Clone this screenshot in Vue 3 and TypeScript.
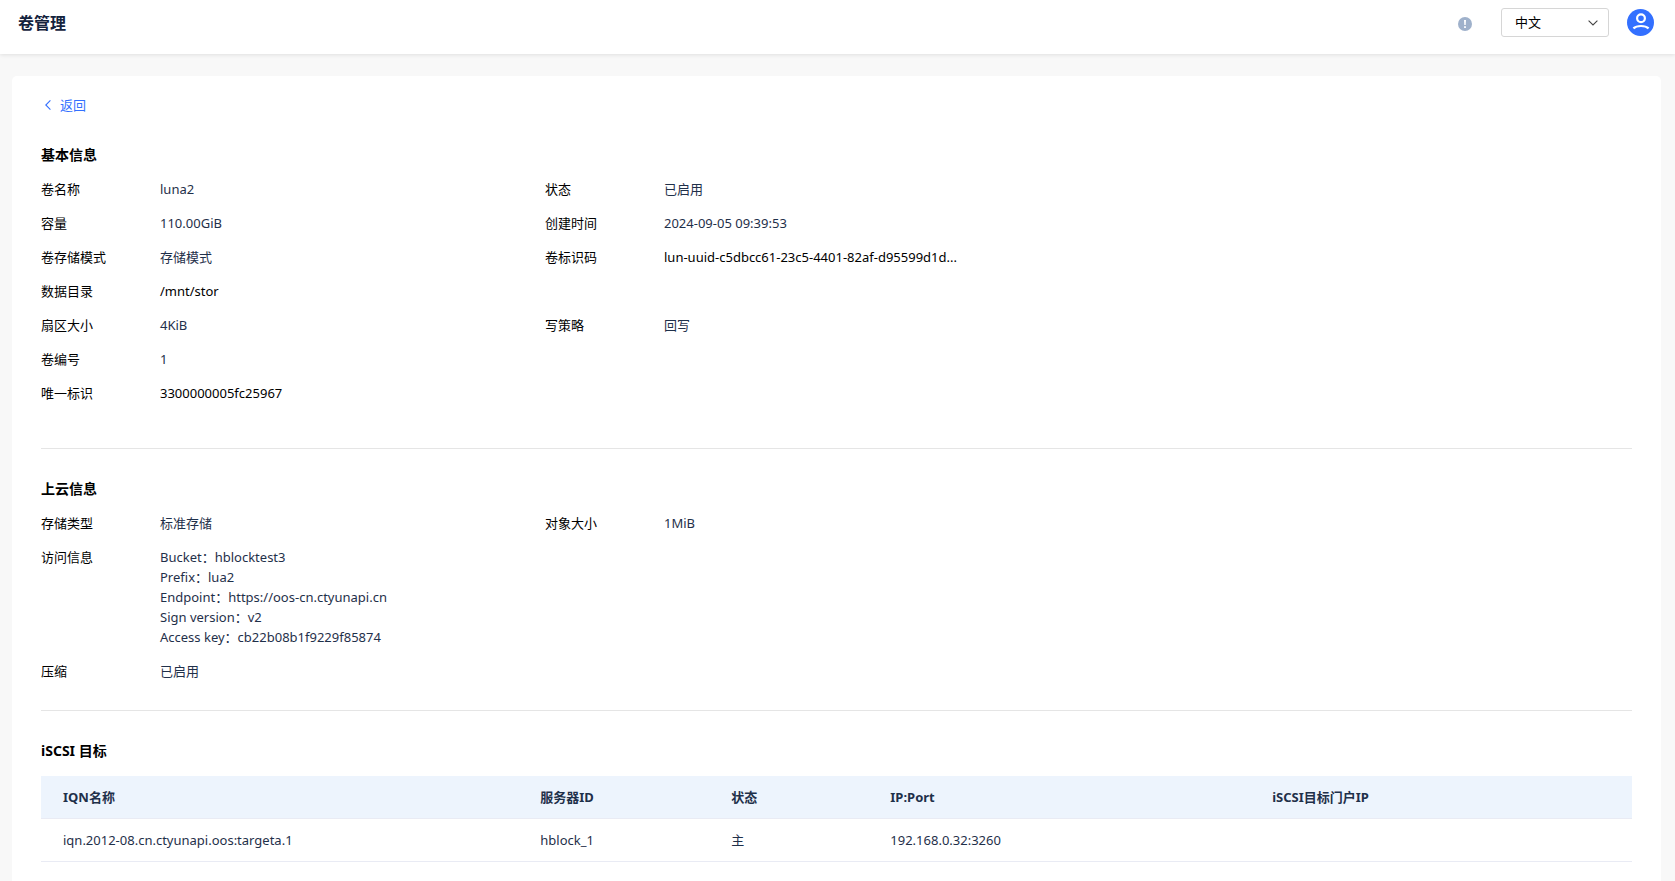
<script setup lang="ts">
import { ref } from 'vue'

interface Field {
  label: string
  lines: string[]
  column?: 1 | 2
  strong?: boolean
}

interface Target {
  iqn: string
  server: string
  status: string
  address: string
  portal: string
}

const language = ref('zh')

const basicFields: Field[] = [
  { label: '卷名称', lines: ['luna2'] },
  { label: '状态', lines: ['已启用'], column: 2 },
  { label: '容量', lines: ['110.00GiB'] },
  { label: '创建时间', lines: ['2024-09-05 09:39:53'], column: 2 },
  { label: '卷存储模式', lines: ['存储模式'] },
  { label: '卷标识码', lines: ['lun-uuid-c5dbcc61-23c5-4401-82af-d95599d1d...'], column: 2, strong: true },
  { label: '数据目录', lines: ['/mnt/stor'], strong: true },
  { label: '扇区大小', lines: ['4KiB'] },
  { label: '写策略', lines: ['回写'], column: 2 },
  { label: '卷编号', lines: ['1'] },
  { label: '唯一标识', lines: ['3300000005fc25967'], strong: true },
]

const cloudFields: Field[] = [
  { label: '存储类型', lines: ['标准存储'] },
  { label: '对象大小', lines: ['1MiB'], column: 2 },
  {
    label: '访问信息',
    lines: [
      'Bucket：hblocktest3',
      'Prefix：lua2',
      'Endpoint：https://oos-cn.ctyunapi.cn',
      'Sign version：v2',
      'Access key：cb22b08b1f9229f85874',
    ],
  },
  { label: '压缩', lines: ['已启用'] },
]

const targets: Target[] = [
  { iqn: 'iqn.2012-08.cn.ctyunapi.oos:targeta.1', server: 'hblock_1', status: '主', address: '192.168.0.32:3260', portal: '' },
]
</script>

<template>
  <div class="page">
    <header class="topbar">
      <h1 class="title">卷管理</h1>
      <div class="tools">
        <button class="icon-button notice" type="button" aria-label="提示">
          <svg width="14" height="14" viewBox="0 0 14 14">
            <circle cx="7" cy="7" r="7" fill="#9fb1cb" />
            <path d="M6 3h2l-.3 5H6.3z" fill="#fff" />
            <rect x="6.1" y="9.2" width="1.8" height="1.8" fill="#fff" />
          </svg>
        </button>
        <div class="select">
          <select v-model="language" aria-label="语言">
            <option value="zh">中文</option>
            <option value="en">English</option>
          </select>
          <svg class="chevron" width="10" height="6" viewBox="0 0 10 6" aria-hidden="true">
            <path d="M.6.6 5 5 9.4.6" fill="none" stroke="#444" stroke-width="1.1" />
          </svg>
        </div>
        <button class="icon-button" type="button" aria-label="用户">
          <svg width="27" height="27" viewBox="0 0 27 27">
            <circle cx="13.5" cy="13.5" r="13.5" fill="#3370ff" />
            <circle cx="14" cy="9.3" r="3.9" fill="none" stroke="#fff" stroke-width="2.2" />
            <path d="M6.4 19.4C9.8 16.2 18.2 16.2 21.6 19.4" fill="none" stroke="#fff" stroke-width="2.2" />
          </svg>
        </button>
      </div>
    </header>

    <main class="card">
      <a class="back" href="#">
        <svg width="6" height="10" viewBox="0 0 6 10" aria-hidden="true">
          <path d="M5.4.4.8 5l4.6 4.6" fill="none" stroke="#3370ff" stroke-width="1.1" />
        </svg>
        <span>返回</span>
      </a>

      <section class="basic">
        <h2>基本信息</h2>
        <dl class="fields">
          <div v-for="f in basicFields" :key="f.label" class="field" :class="{ second: f.column === 2, strong: f.strong }">
            <dt>{{ f.label }}</dt>
            <dd><div v-for="line in f.lines" :key="line">{{ line }}</div></dd>
          </div>
        </dl>
      </section>

      <section class="cloud">
        <h2>上云信息</h2>
        <dl class="fields">
          <div v-for="f in cloudFields" :key="f.label" class="field" :class="{ second: f.column === 2 }">
            <dt>{{ f.label }}</dt>
            <dd><div v-for="line in f.lines" :key="line">{{ line }}</div></dd>
          </div>
        </dl>
      </section>

      <section class="targets">
        <h2>iSCSI 目标</h2>
        <table>
          <colgroup>
            <col class="col-iqn" />
            <col class="col-server" />
            <col class="col-status" />
            <col />
            <col />
          </colgroup>
          <thead>
            <tr>
              <th scope="col">IQN名称</th>
              <th scope="col">服务器ID</th>
              <th scope="col">状态</th>
              <th scope="col">IP:Port</th>
              <th scope="col">iSCSI目标门户IP</th>
            </tr>
          </thead>
          <tbody>
            <tr v-for="t in targets" :key="t.iqn">
              <td>{{ t.iqn }}</td>
              <td>{{ t.server }}</td>
              <td>{{ t.status }}</td>
              <td>{{ t.address }}</td>
              <td>{{ t.portal }}</td>
            </tr>
          </tbody>
        </table>
      </section>
    </main>
  </div>
</template>

<style>
body {
  margin: 0;
  background: #f8f8f8;
}
</style>

<style scoped>
.page {
  display: flex;
  flex-direction: column;
  min-height: 100vh;
  box-sizing: border-box;
  font-family: "Noto Sans", "Noto Sans CJK SC", sans-serif;
  font-size: 13px;
  line-height: 20px;
  color: #1f304a;
}

.topbar {
  display: flex;
  align-items: center;
  justify-content: space-between;
  box-sizing: border-box;
  height: 54px;
  padding: 0 21px 9px 18px;
  background: #fff;
  box-shadow: 0 1px 4px rgba(0, 0, 0, 0.1);
}

.title {
  margin: 0;
  font-size: 16px;
  font-weight: 600;
  line-height: 24px;
  color: #14233d;
}

.tools {
  display: flex;
  align-items: center;
}

.icon-button {
  display: flex;
  padding: 0;
  border: 0;
  background: none;
  cursor: pointer;
}

.notice {
  margin: 2px 29px 0 0;
}

.select {
  display: grid;
  align-items: center;
  width: 108px;
  margin-right: 18px;
}

.select > * {
  grid-area: 1 / 1;
}

select {
  width: 100%;
  height: 29px;
  padding: 0 28px 2px 13px;
  border: 1px solid #d6d6d6;
  border-radius: 3px;
  background: #fff;
  font: inherit;
  color: #000;
  appearance: none;
}

.chevron {
  justify-self: end;
  margin-right: 11px;
  pointer-events: none;
}

.card {
  flex: 1;
  margin: 22px 14px 0 12px;
  padding: 19px 29px 18px;
  border-radius: 5px 5px 0 0;
  background: #fff;
}

.back {
  display: inline-flex;
  align-items: center;
  gap: 9px;
  padding-left: 4px;
  color: #3370ff;
  text-decoration: none;
}

section {
  padding-top: 30px;
}

.basic {
  padding-bottom: 45px;
  border-bottom: 1px solid #e5e5e5;
}

.cloud {
  padding-bottom: 29px;
  border-bottom: 1px solid #e5e5e5;
}

h2 {
  margin: 0 0 14px;
  font-size: 14px;
  font-weight: 700;
  line-height: 20px;
  color: #000;
}

.targets h2 {
  margin-bottom: 15px;
}

.fields {
  display: grid;
  grid-template-columns: repeat(2, minmax(0, 504px));
  row-gap: 14px;
  margin: 0;
}

.field {
  display: grid;
  grid-template-columns: 119px 1fr;
  grid-column: 1;
}

.second {
  grid-column: 2;
}

dt,
.strong dd {
  color: #000;
}

dd {
  margin: 0;
}

table {
  width: 100%;
  border-collapse: collapse;
  table-layout: fixed;
}

.col-iqn {
  width: 30%;
}

.col-server {
  width: 12%;
}

.col-status {
  width: 10%;
}

th,
td {
  padding: 11px 21px 11px 22px;
  height: 20px;
  border-bottom: 1px solid #e9ebf4;
  text-align: left;
}

th {
  background: #edf4fd;
  font-weight: 700;
}
</style>
